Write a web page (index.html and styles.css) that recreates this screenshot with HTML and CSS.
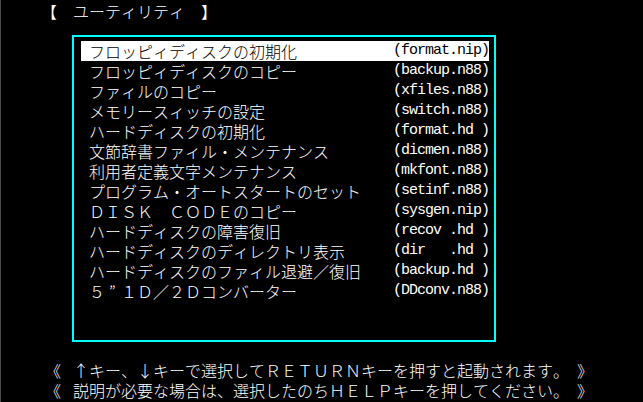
FILE: index.html
```html
<!DOCTYPE html>
<html lang="ja">
<head>
    <meta charset="UTF-8">
    <title>ユーティリティ</title>
    <link rel="stylesheet" href="styles.css">
</head>
<body>
<div class="screen">
    <div class="title">【　ユーティリティ　】</div>
    <div class="menu">
        <div class="item current"><span class="name">フロッピィディスクの初期化</span><span class="file">(format.nip)</span></div>
        <div class="item"><span class="name">フロッピィディスクのコピー</span><span class="file">(backup.n88)</span></div>
        <div class="item"><span class="name">ファィルのコピー</span><span class="file">(xfiles.n88)</span></div>
        <div class="item"><span class="name">メモリースィッチの設定</span><span class="file">(switch.n88)</span></div>
        <div class="item"><span class="name">ハードディスクの初期化</span><span class="file">(format.hd )</span></div>
        <div class="item"><span class="name">文節辞書ファィル・メンテナンス</span><span class="file">(dicmen.n88)</span></div>
        <div class="item"><span class="name">利用者定義文字メンテナンス</span><span class="file">(mkfont.n88)</span></div>
        <div class="item"><span class="name">プログラム・オートスタートのセット</span><span class="file">(setinf.n88)</span></div>
        <div class="item"><span class="name">ＤＩＳＫ　ＣＯＤＥのコピー</span><span class="file">(sysgen.nip)</span></div>
        <div class="item"><span class="name">ハードディスクの障害復旧</span><span class="file">(recov .hd )</span></div>
        <div class="item"><span class="name">ハードディスクのディレクトリ表示</span><span class="file">(dir   .hd )</span></div>
        <div class="item"><span class="name">ハードディスクのファィル退避／復旧</span><span class="file">(backup.hd )</span></div>
        <div class="item"><span class="name">５<span class="wide">”</span>１Ｄ／２Ｄコンバーター</span><span class="file">(DDconv.n88)</span></div>
    </div>
    <div class="help">
        <div class="line"><span class="mark">《</span>↑キー、↓キーで選択してＲＥＴＵＲＮキーを押すと起動されます。　》</div>
        <div class="line"><span class="mark">《</span>説明が必要な場合は、選択したのちＨＥＬＰキーを押してください。　》</div>
    </div>
</div>
</body>
</html>
```

FILE: styles.css
```css
body {
    margin: 0;
    padding: 0;
    background-color: #000000;
    overflow: hidden;
}
.screen {
    width: 642px;
    height: 401px;
    padding-top: 1px;
    border-left: 1px solid #4a4a4a;
    color: #ffffff;
    font-family: "Noto Sans CJK JP", sans-serif;
    font-size: 16px;
    font-weight: 300;
    line-height: 20px;
    font-kerning: none;
    font-feature-settings: "palt" 0, "kern" 0;
    text-autospace: no-autospace;
}
.title, .line, .name, .file {
    white-space: pre;
}
.title {
    height: 20px;
    padding-left: 40px;
}
.menu {
    width: 408px;
    margin: 14px 0 0 71px;
    padding: 4px 5px 39px 7px;
    border: 2px solid #00ffff;
}
.item {
    display: grid;
    grid-template-columns: 8px 304px 96px;
    height: 20px;
}
.item .name {
    grid-column: 2;
}
.item .file {
    grid-column: 3;
    font-family: "Liberation Mono", monospace;
    font-size: 15px;
    font-weight: 400;
    letter-spacing: -1px;
}
.wide {
    display: inline-block;
    width: 16px;
    padding-left: 4px;
    box-sizing: border-box;
}
.current {
    background-color: #ffffff;
    color: #000000;
}
.help {
    margin-top: 18px;
    padding-left: 44px;
}
.line {
    height: 20px;
}
.mark {
    display: inline-block;
    width: 16px;
    margin-right: 12px;
}
```
